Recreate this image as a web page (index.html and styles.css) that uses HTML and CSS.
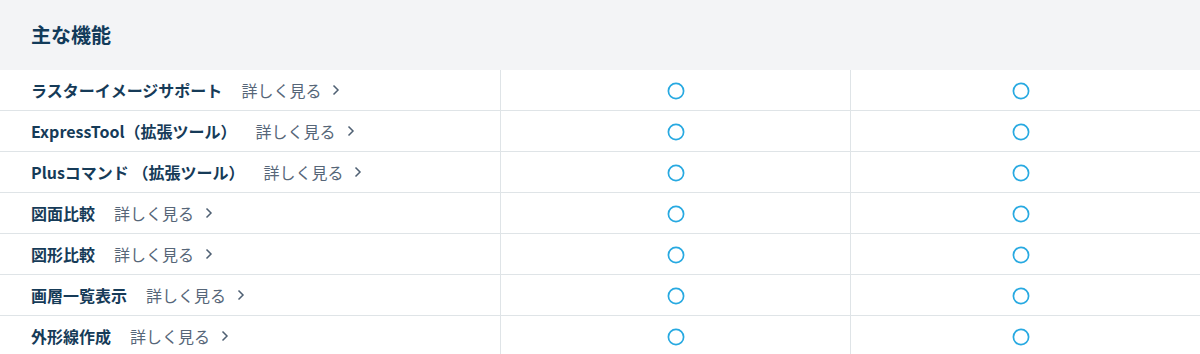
FILE: index.html
```html
<!DOCTYPE html>
<html lang="ja">
<head>
<meta charset="utf-8">
<link rel="stylesheet" href="styles.css">
</head>
<body>
<div class="table">
  <div class="head"><h2 class="title">主な機能</h2></div>
  <div class="row">
    <div class="cell name"><span class="label">ラスターイメージサポート</span><a class="more" href="#">詳しく見る<svg class="chev" width="8" height="12" viewBox="0 0 8 12"><path d="M1.5 1.5 L6 6 L1.5 10.5" fill="none" stroke="#4f6073" stroke-width="1.5"/></svg></a></div>
    <div class="cell mark"><svg class="circ" width="18" height="18" viewBox="0 0 18 18"><circle cx="9" cy="9" r="7.6" fill="none" stroke="#27a9e1" stroke-width="1.7"/></svg></div>
    <div class="cell mark last"><svg class="circ" width="18" height="18" viewBox="0 0 18 18"><circle cx="9" cy="9" r="7.6" fill="none" stroke="#27a9e1" stroke-width="1.7"/></svg></div>
  </div>
  <div class="row">
    <div class="cell name"><span class="label">ExpressTool（拡張ツール）</span><a class="more" href="#">詳しく見る<svg class="chev" width="8" height="12" viewBox="0 0 8 12"><path d="M1.5 1.5 L6 6 L1.5 10.5" fill="none" stroke="#4f6073" stroke-width="1.5"/></svg></a></div>
    <div class="cell mark"><svg class="circ" width="18" height="18" viewBox="0 0 18 18"><circle cx="9" cy="9" r="7.6" fill="none" stroke="#27a9e1" stroke-width="1.7"/></svg></div>
    <div class="cell mark last"><svg class="circ" width="18" height="18" viewBox="0 0 18 18"><circle cx="9" cy="9" r="7.6" fill="none" stroke="#27a9e1" stroke-width="1.7"/></svg></div>
  </div>
  <div class="row">
    <div class="cell name"><span class="label">Plusコマンド （拡張ツール）</span><a class="more" href="#">詳しく見る<svg class="chev" width="8" height="12" viewBox="0 0 8 12"><path d="M1.5 1.5 L6 6 L1.5 10.5" fill="none" stroke="#4f6073" stroke-width="1.5"/></svg></a></div>
    <div class="cell mark"><svg class="circ" width="18" height="18" viewBox="0 0 18 18"><circle cx="9" cy="9" r="7.6" fill="none" stroke="#27a9e1" stroke-width="1.7"/></svg></div>
    <div class="cell mark last"><svg class="circ" width="18" height="18" viewBox="0 0 18 18"><circle cx="9" cy="9" r="7.6" fill="none" stroke="#27a9e1" stroke-width="1.7"/></svg></div>
  </div>
  <div class="row">
    <div class="cell name"><span class="label">図面比較</span><a class="more" href="#">詳しく見る<svg class="chev" width="8" height="12" viewBox="0 0 8 12"><path d="M1.5 1.5 L6 6 L1.5 10.5" fill="none" stroke="#4f6073" stroke-width="1.5"/></svg></a></div>
    <div class="cell mark"><svg class="circ" width="18" height="18" viewBox="0 0 18 18"><circle cx="9" cy="9" r="7.6" fill="none" stroke="#27a9e1" stroke-width="1.7"/></svg></div>
    <div class="cell mark last"><svg class="circ" width="18" height="18" viewBox="0 0 18 18"><circle cx="9" cy="9" r="7.6" fill="none" stroke="#27a9e1" stroke-width="1.7"/></svg></div>
  </div>
  <div class="row">
    <div class="cell name"><span class="label">図形比較</span><a class="more" href="#">詳しく見る<svg class="chev" width="8" height="12" viewBox="0 0 8 12"><path d="M1.5 1.5 L6 6 L1.5 10.5" fill="none" stroke="#4f6073" stroke-width="1.5"/></svg></a></div>
    <div class="cell mark"><svg class="circ" width="18" height="18" viewBox="0 0 18 18"><circle cx="9" cy="9" r="7.6" fill="none" stroke="#27a9e1" stroke-width="1.7"/></svg></div>
    <div class="cell mark last"><svg class="circ" width="18" height="18" viewBox="0 0 18 18"><circle cx="9" cy="9" r="7.6" fill="none" stroke="#27a9e1" stroke-width="1.7"/></svg></div>
  </div>
  <div class="row">
    <div class="cell name"><span class="label">画層一覧表示</span><a class="more" href="#">詳しく見る<svg class="chev" width="8" height="12" viewBox="0 0 8 12"><path d="M1.5 1.5 L6 6 L1.5 10.5" fill="none" stroke="#4f6073" stroke-width="1.5"/></svg></a></div>
    <div class="cell mark"><svg class="circ" width="18" height="18" viewBox="0 0 18 18"><circle cx="9" cy="9" r="7.6" fill="none" stroke="#27a9e1" stroke-width="1.7"/></svg></div>
    <div class="cell mark last"><svg class="circ" width="18" height="18" viewBox="0 0 18 18"><circle cx="9" cy="9" r="7.6" fill="none" stroke="#27a9e1" stroke-width="1.7"/></svg></div>
  </div>
  <div class="row">
    <div class="cell name"><span class="label">外形線作成</span><a class="more" href="#">詳しく見る<svg class="chev" width="8" height="12" viewBox="0 0 8 12"><path d="M1.5 1.5 L6 6 L1.5 10.5" fill="none" stroke="#4f6073" stroke-width="1.5"/></svg></a></div>
    <div class="cell mark"><svg class="circ" width="18" height="18" viewBox="0 0 18 18"><circle cx="9" cy="9" r="7.6" fill="none" stroke="#27a9e1" stroke-width="1.7"/></svg></div>
    <div class="cell mark last"><svg class="circ" width="18" height="18" viewBox="0 0 18 18"><circle cx="9" cy="9" r="7.6" fill="none" stroke="#27a9e1" stroke-width="1.7"/></svg></div>
  </div>
</div>
</body>
</html>
```
FILE: styles.css
```css
html, body {
  margin: 0;
  padding: 0;
  background: #ffffff;
}
body {
  font-family: "Noto Sans CJK JP", "Noto Sans", sans-serif;
  color: #163b58;
}
.table {
  width: 1200px;
}
.head {
  height: 70px;
  background: #f3f4f6;
  display: flex;
  align-items: center;
  padding-left: 31px;
  box-sizing: border-box;
}
.title {
  margin: 0;
  font-size: 20px;
  font-weight: 700;
  line-height: 1;
  color: #123b5a;
}
.row {
  display: grid;
  grid-template-columns: 500px 350px 350px;
  height: 41px;
  border-bottom: 1px solid #dfe4e7;
  box-sizing: border-box;
}
.cell {
  display: flex;
  align-items: center;
}
.name {
  padding-left: 31px;
  gap: 19px;
}
.label {
  font-size: 16px;
  font-weight: 700;
  color: #163b58;
  line-height: 1;
}
.more {
  font-size: 16px;
  color: #566678;
  text-decoration: none;
  display: flex;
  align-items: center;
  gap: 11px;
  line-height: 1;
}
.chev {
  display: block;
}
.mark {
  justify-content: center;
  border-left: 1px solid #dfe4e7;
  padding-top: 1px;
}
.mark.last {
  padding-right: 10px;
}
.circ {
  display: block;
}
```
